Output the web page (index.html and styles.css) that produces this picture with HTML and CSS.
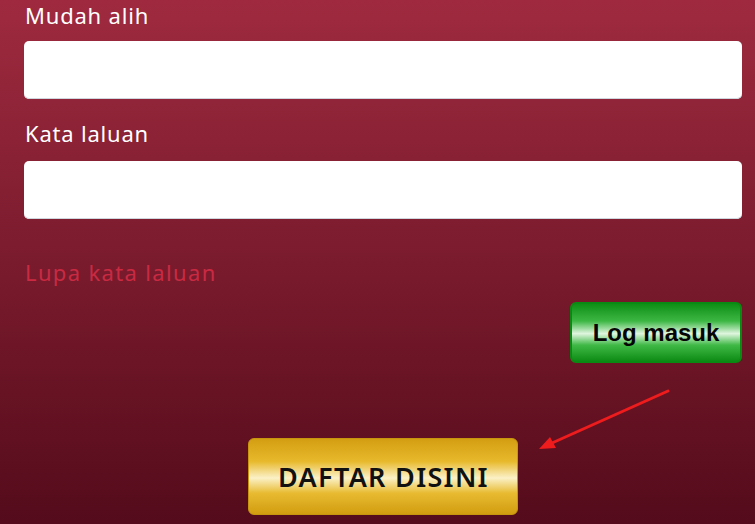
FILE: index.html
```html
<!DOCTYPE html>
<html lang="ms">
<head>
<meta charset="utf-8">
<link rel="stylesheet" href="styles.css">
</head>
<body>
<div class="page">
  <form class="form">
    <label class="label">Mudah alih</label>
    <div class="input"></div>
    <label class="label label-2">Kata laluan</label>
    <div class="input"></div>
    <a class="forgot">Lupa kata laluan</a>
    <div class="login-row">
      <button type="button" class="btn-login">Log masuk</button>
    </div>
    <div class="register-row">
      <button type="button" class="btn-register">DAFTAR DISINI</button>
    </div>
  </form>
  <svg class="arrow" width="755" height="524" viewBox="0 0 755 524">
    <line x1="668" y1="391" x2="552" y2="443" stroke="#ee1c1c" stroke-width="3" stroke-linecap="round"/>
    <polygon points="539,449 550,437 556,448" fill="#ee1c1c"/>
  </svg>
</div>
</body>
</html>
```
FILE: styles.css
```css
html, body {
  margin: 0;
  padding: 0;
}
body {
  width: 755px;
  height: 524px;
  overflow: hidden;
  background: linear-gradient(to bottom, #9f2a3f 0%, #7a1b2d 50%, #540b1b 100%);
  font-family: "Noto Sans", "Lato", sans-serif;
}
.page {
  position: relative;
  width: 755px;
  height: 524px;
}
.form {
  display: flex;
  flex-direction: column;
  padding: 0 13px 0 24px;
  margin: 0;
}
.label {
  display: block;
  color: #ffffff;
  font-size: 22px;
  line-height: 30px;
  height: 30px;
  margin-bottom: 11px;
  padding-left: 1px;
  letter-spacing: 0.8px;
}
.label-2 {
  margin-top: 19px;
  margin-bottom: 13px;
}
.input {
  height: 58px;
  background: #ffffff;
  border-radius: 5px;
  box-shadow: inset 0 -1px 0 #cfd6de;
}
.forgot {
  display: block;
  margin-top: 38px;
  color: #c92a42;
  font-size: 22px;
  line-height: 30px;
  height: 30px;
  padding-left: 1px;
  letter-spacing: 1.35px;
}
.login-row {
  display: flex;
  justify-content: flex-end;
  margin-top: 15px;
}
.btn-login {
  width: 172px;
  height: 61px;
  border: 2px solid #0a8a12;
  border-radius: 6px;
  background: linear-gradient(to bottom, #0e8f16 0%, #3db744 30%, #dff5df 52%, #40b946 72%, #0d8c15 100%);
  font-family: "Liberation Sans", Arial, sans-serif;
  font-weight: bold;
  font-size: 24px;
  color: #050505;
  padding: 0;
}
.register-row {
  display: flex;
  justify-content: center;
  margin-top: 75px;
}
.btn-register {
  width: 270px;
  height: 77px;
  border: 1px solid #c8960e;
  border-radius: 6px;
  background: linear-gradient(to bottom, #d49e12 0%, #e8b92c 30%, #fbf1c8 52%, #e8bb31 72%, #d29c10 100%);
  font-family: "Noto Sans", "Lato", sans-serif;
  font-weight: 600;
  font-size: 27px;
  letter-spacing: 1.3px;
  color: #111111;
  padding: 0 0 0 1px;
}
.arrow {
  position: absolute;
  left: 0;
  top: 0;
  pointer-events: none;
}
```
